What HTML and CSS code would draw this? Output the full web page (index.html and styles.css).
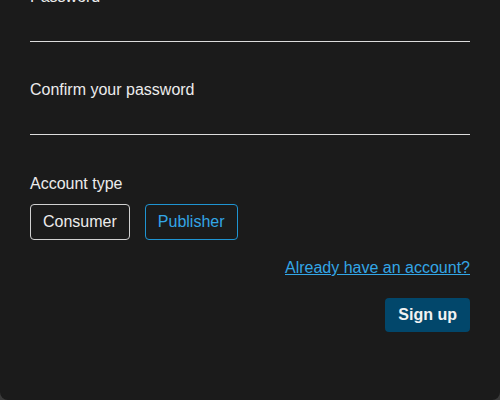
FILE: index.html
```html
<!DOCTYPE html>
<html>
<head>
<meta charset="utf-8">
<link rel="stylesheet" href="styles.css">
</head>
<body>
<form class="card">
  <div class="field">
    <label class="label">Password</label>
    <input class="input" type="password">
  </div>
  <div class="field">
    <label class="label">Confirm your password</label>
    <input class="input" type="password">
  </div>
  <div class="account">
    <div class="label">Account type</div>
    <div class="choices">
      <button type="button" class="choice">Consumer</button>
      <button type="button" class="choice active">Publisher</button>
    </div>
  </div>
  <div class="links">
    <a href="#" class="login-link">Already have an account?</a>
  </div>
  <div class="actions">
    <button type="button" class="submit">Sign up</button>
  </div>
</form>
</body>
</html>
```
FILE: styles.css
```css
html, body {
  margin: 0;
  padding: 0;
  background: #3a3a3a;
  height: 400px;
  overflow: hidden;
  font-family: "Liberation Sans", Arial, sans-serif;
}
.card {
  box-sizing: border-box;
  height: 412px;
  margin-top: -12px;
  background: #1b1b1b;
  border-radius: 0 0 8px 8px;
  padding: 0 30px;
  display: flex;
  flex-direction: column;
  color: #ececec;
  font-size: 16px;
}
.field {
  display: flex;
  flex-direction: column;
  margin-bottom: 39px;
}
.field + .field {
  margin-bottom: 40px;
}
.label {
  display: block;
  line-height: 18px;
  height: 18px;
}
.input {
  box-sizing: border-box;
  height: 36px;
  background: transparent;
  border: none;
  border-bottom: 1px solid #dcdcdc;
  outline: none;
  color: #ececec;
  font-size: 16px;
  font-family: inherit;
  padding: 0;
}
.choices {
  display: flex;
  gap: 15px;
  margin-top: 11px;
}
.choice {
  box-sizing: border-box;
  height: 36px;
  padding: 0 12px;
  background: transparent;
  border: 1px solid #d0d0d0;
  border-radius: 4px;
  color: #ececec;
  font-size: 16px;
  font-family: inherit;
}
.choice.active {
  border-color: #1f94d2;
  color: #33a6e6;
}
.links {
  display: flex;
  justify-content: flex-end;
  margin-top: 19px;
  line-height: 18px;
}
.login-link {
  color: #33a6e6;
  text-decoration: underline;
}
.actions {
  display: flex;
  justify-content: flex-end;
  margin-top: 21px;
}
.submit {
  box-sizing: border-box;
  height: 34px;
  padding: 0 13px;
  background: #02476b;
  border: none;
  border-radius: 4px;
  color: #f2f2f2;
  font-weight: bold;
  font-size: 16px;
  font-family: inherit;
}
```
